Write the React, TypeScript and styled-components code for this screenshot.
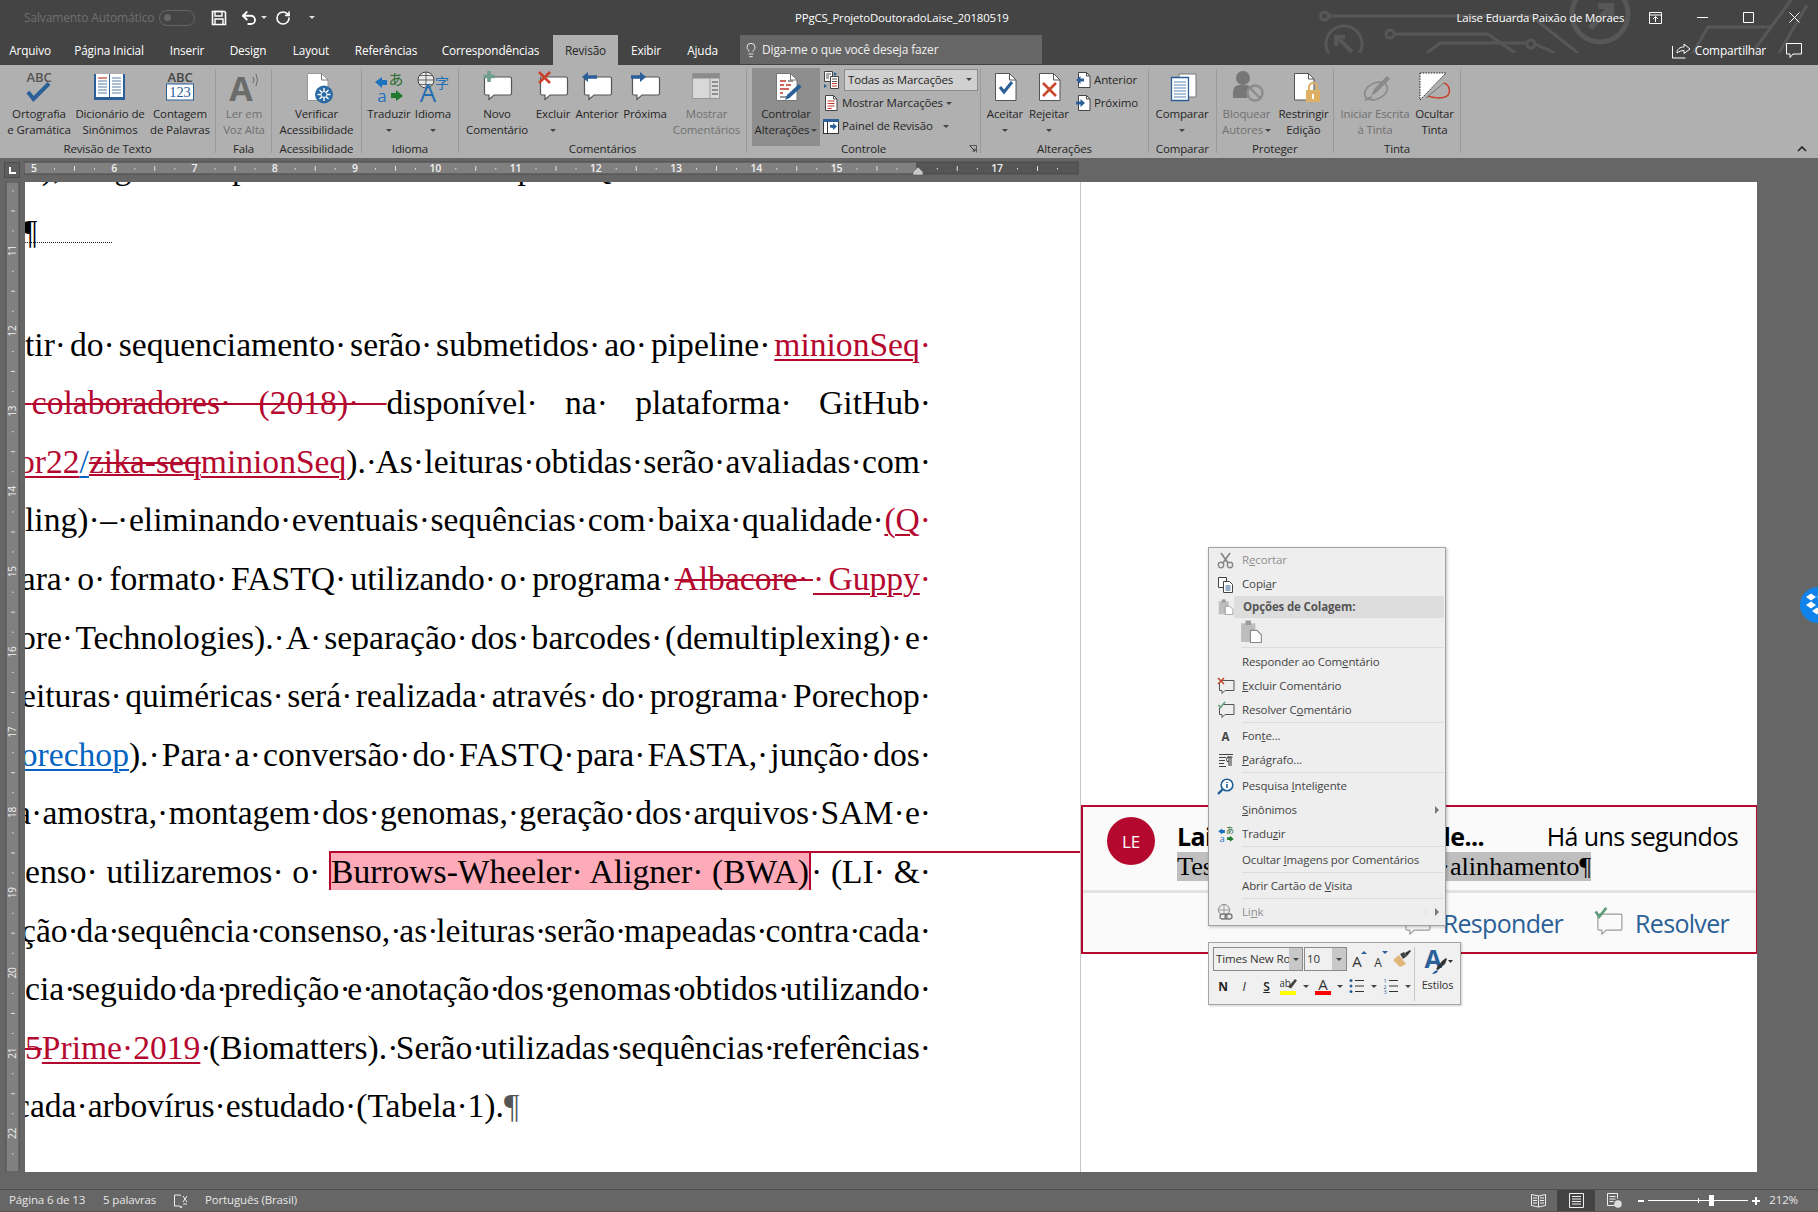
import React from 'react'
import styled, { createGlobalStyle } from 'styled-components'
import { Lightbulb, Undo2, RotateCw } from 'lucide-react'

const UI_FONT = '"Open Sans", "Noto Sans", sans-serif'
const SERIF = '"Liberation Serif", "Times New Roman", serif'
const RED = '#b5082f'
const BLUE = '#2b5f97'

const GlobalStyle = createGlobalStyle`
  html, body {
    margin: 0;
    width: 1818px;
    height: 1212px;
    overflow: hidden;
    background: #666;
  }
`

const Window = styled.div`
  position: relative;
  display: flex;
  flex-direction: column;
  width: 1818px;
  height: 1212px;
  overflow: hidden;
  font-family: ${UI_FONT};
  font-size: 11.5px;
  letter-spacing: -0.14px;
  color: #262626;
`

/* ---------- title bar ---------- */

const Chrome = styled.div`
  position: relative;
  background: #444;
  height: 65px;
  flex-shrink: 0;
`

const CircuitArt = styled.svg`
  position: absolute;
  left: 0;
  top: 0;
`

const TitleBar = styled.div`
  position: relative;
  display: flex;
  align-items: center;
  height: 35px;
  color: #fff;
`

const AutoSaveLabel = styled.span`
  margin-left: 24px;
  width: 135px;
  color: #707070;
  font-size: 12px;
`

const Toggle = styled.span`
  display: block;
  width: 36px;
  height: 16px;
  border: 1.5px solid #666;
  border-radius: 9px;
  box-sizing: border-box;
  padding: 3px 4px;
  &::before {
    content: '';
    display: block;
    width: 7px;
    height: 7px;
    border-radius: 50%;
    background: #666;
  }
`

const Qat = styled.div`
  display: flex;
  align-items: center;
  margin-left: 16px;
  width: 585px;
`

const QatSlot = styled.span<{ $w: number }>`
  display: flex;
  align-items: center;
  width: ${(p) => p.$w}px;
`

const DocTitle = styled.span`
  width: 300px;
  font-size: 11.4px;
`

const UserName = styled.span`
  margin-left: 362px;
  width: 176px;
  font-size: 11.4px;
  white-space: nowrap;
`

const WinBtn = styled.span<{ $w: number }>`
  display: flex;
  justify-content: center;
  width: ${(p) => p.$w}px;
`

const TabRow = styled.div`
  position: relative;
  display: flex;
  align-items: stretch;
  height: 30px;
`

const Tab = styled.span<{ $w: number; $active?: boolean }>`
  display: flex;
  align-items: center;
  justify-content: center;
  width: ${(p) => p.$w}px;
  font-size: 11.8px;
  margin-left: ${(p) => (p.$active ? 2 : 0)}px;
  color: ${(p) => (p.$active ? '#262626' : '#fff')};
  background: ${(p) => (p.$active ? '#b0b0b0' : 'transparent')};
`

const TellMe = styled.div`
  display: flex;
  align-items: center;
  gap: 3px;
  margin-left: 9px;
  padding-left: 3px;
  width: 299px;
  height: 29px;
  background: #666;
  color: #f0f0f0;
  font-size: 12px;
`

const ShareBox = styled.div`
  display: flex;
  align-items: center;
  margin-left: auto;
  padding-right: 15px;
  color: #fff;
  font-size: 11.8px;
  gap: 4px;
`

const CommentToggle = styled.span`
  display: block;
  margin-left: 15px;
`

/* ---------- ribbon ---------- */

const Ribbon = styled.div`
  position: relative;
  display: flex;
  height: 93px;
  background: #b0b0b0;
  flex-shrink: 0;
`

const Group = styled.div<{ $w: number }>`
  position: relative;
  width: ${(p) => p.$w}px;
  height: 84px;
  margin-top: 4px;
  flex-shrink: 0;
  box-sizing: border-box;
  border-right: 1px solid #9a9a9a;
`

const GroupBody = styled.div<{ $pad?: number }>`
  display: flex;
  height: 72px;
  padding-left: ${(p) => p.$pad ?? 0}px;
`

const GroupLabel = styled.div`
  height: 16px;
  line-height: 16px;
  text-align: center;
  white-space: nowrap;
`

const Launcher = styled.svg`
  position: absolute;
  right: 3px;
  bottom: 0;
`

const BtnWrap = styled.div<{ $w: number; $active?: boolean; $off?: boolean }>`
  display: flex;
  flex-direction: column;
  align-items: center;
  flex-shrink: 0;
  width: ${(p) => p.$w}px;
  height: ${(p) => (p.$active ? 78 : 72)}px;
  margin-top: ${(p) => (p.$active ? -1 : 0)}px;
  background: ${(p) => (p.$active ? '#8e8e8e' : 'transparent')};
  color: ${(p) => (p.$off ? '#707070' : '#262626')};
`

const IconSlot = styled.div<{ $active?: boolean }>`
  display: flex;
  justify-content: center;
  height: 37px;
  width: 36px;
  margin-top: ${(p) => (p.$active ? 1 : 0)}px;
`

const BtnText = styled.div`
  line-height: 16px;
  text-align: center;
  white-space: nowrap;
`

const CaretLine = styled.div`
  display: flex;
  justify-content: center;
  align-items: center;
  height: 16px;
`

const Caret = styled.span<{ $c?: string; $m?: number }>`
  display: inline-block;
  margin-left: ${(p) => p.$m ?? 0}px;
  width: 0;
  height: 0;
  vertical-align: middle;
  border-left: 3px solid transparent;
  border-right: 3px solid transparent;
  border-top: 3px solid ${(p) => p.$c ?? '#444'};
`

const SmallColumn = styled.div<{ $ml: number }>`
  display: flex;
  flex-direction: column;
  margin-left: ${(p) => p.$ml}px;
  margin-top: -1px;
`

const SmallRow = styled.div`
  display: flex;
  align-items: center;
  height: 23px;
  gap: 3px;
  white-space: nowrap;
`

const MarkupSelect = styled.div`
  display: flex;
  align-items: center;
  justify-content: space-between;
  box-sizing: border-box;
  width: 134px;
  height: 22px;
  padding: 0 5px 0 3px;
  background: #d0d0d0;
  border: 1px solid #8c8c8c;
`

const CollapseRibbon = styled.svg`
  position: absolute;
  right: 11px;
  bottom: 6px;
`

const Glyph = styled.svg`
  display: block;
  flex-shrink: 0;
`

/* ---------- rulers ---------- */

const RulerRow = styled.div`
  display: flex;
  align-items: flex-start;
  height: 24px;
  background: #666;
  flex-shrink: 0;
`

const RulerCorner = styled.div`
  margin: 4px 4px 0 4px;
  width: 14px;
  height: 14px;
  border: 1px solid #4c4c4c;
  background: #5e5e5e;
  display: flex;
  align-items: flex-end;
  justify-content: center;
  box-sizing: content-box;
  &::before {
    content: '';
    width: 5px;
    height: 5px;
    margin-bottom: 3px;
    border-left: 2px solid #fff;
    border-bottom: 2px solid #fff;
  }
`

/* ---------- document ---------- */

const Workspace = styled.div`
  display: flex;
  height: 990px;
  flex-shrink: 0;
`

const PageSheet = styled.div`
  display: flex;
  width: 1732px;
  background: #fff;
  flex-shrink: 0;
`

const TextColumn = styled.div`
  width: 1055px;
  box-sizing: border-box;
  padding-right: 149px;
  overflow: hidden;
  font-family: ${SERIF};
  font-size: 33.6px;
  letter-spacing: 0;
  color: #000;
  flex-shrink: 0;
`

const Line = styled.div<{ $last?: boolean; $bleed?: number; $after?: number; $top?: number }>`
  height: 58.6px;
  line-height: 58.6px;
  word-spacing: ${(p) => (p.$last ? '-0.25em' : '-0.5em')};
  white-space: normal;
  text-align: justify;
  text-align-last: ${(p) => (p.$last ? 'left' : 'justify')};
  margin-left: ${(p) => -(p.$bleed ?? 0)}px;
  margin-top: ${(p) => p.$top ?? 0}px;
  margin-bottom: ${(p) => p.$after ?? 0}px;
`

const CutLine = styled.div`
  height: 58.6px;
  line-height: 58.6px;
  white-space: pre;
  margin-top: -43px;
`

const Leader = styled.span`
  display: inline-block;
  width: 88px;
  height: 0;
  margin-left: -13px;
  border-bottom: 1px dotted #222;
  vertical-align: baseline;
`

const Ins = styled.span`
  color: ${RED};
  text-decoration: underline;
  text-decoration-thickness: 2px;
  text-underline-offset: 3px;
`

const InsDot = styled.span`
  color: ${RED};
`

const Del = styled.span<{ $dotted?: boolean }>`
  color: ${RED};
  text-decoration: line-through ${(p) => (p.$dotted ? 'underline' : '')};
  text-decoration-thickness: 2px;
`

const HyperLink = styled.span`
  color: #0563c1;
  text-decoration: underline;
  text-decoration-thickness: 2px;
  text-underline-offset: 3px;
`

const CommentMark = styled.span`
  position: relative;
  background: #fdaab9;
  border-top: 2px solid ${RED};
  border-left: 2px solid ${RED};
  border-right: 2px solid ${RED};
  &::after {
    content: '';
    position: absolute;
    left: 100%;
    top: -2px;
    width: 400px;
    height: 2px;
    background: ${RED};
  }
`

const Mark = styled.span`
  color: #555;
`

const MarkupArea = styled.div`
  flex: 1;
  border-left: 1px solid #c6c6c6;
  padding-top: 623px;
  min-width: 0;
`

const CommentCard = styled.div`
  box-sizing: border-box;
  height: 149px;
  border: 2px solid ${RED};
  border-right-width: 1px;
  background: #fafafa;
  display: flex;
  flex-direction: column;
`

const CommentTop = styled.div`
  display: flex;
  height: 83px;
  padding-left: 24px;
`

const Avatar = styled.div`
  display: flex;
  align-items: center;
  justify-content: center;
  flex-shrink: 0;
  width: 48px;
  height: 48px;
  margin-top: 10px;
  border-radius: 50%;
  background: ${RED};
  color: #fff;
  font-size: 17px;
`

const CommentBody = styled.div`
  margin-left: 22px;
  flex: 1;
`

const CommentHead = styled.div`
  display: flex;
  align-items: center;
  justify-content: space-between;
  box-sizing: border-box;
  height: 45px;
  padding: 12px 18px 0 0;
  font-size: 25px;
  letter-spacing: -0.6px;
  color: #000;
`

const Author = styled.span`
  font-weight: 700;
`

const CommentText = styled.div`
  font-family: ${SERIF};
  font-size: 26.2px;
  letter-spacing: 0;
  color: #000;
  word-spacing: -0.25em;
  line-height: 29px;
  height: 29px;
  white-space: nowrap;
`

const Selected = styled.span`
  background: #bfbfbf;
`

const CommentDivider = styled.div`
  height: 3px;
  background: #e3e3e3;
`

const CommentFoot = styled.div`
  display: flex;
  align-items: center;
  justify-content: flex-end;
  flex: 1;
  padding-right: 27px;
  gap: 30px;
  color: ${BLUE};
  font-size: 25px;
  letter-spacing: -0.7px;
`

const CommentAction = styled.span`
  display: flex;
  align-items: center;
  gap: 10px;
`

/* ---------- floating menu ---------- */

const ContextMenu = styled.div`
  position: absolute;
  left: 1208px;
  top: 547px;
  width: 238px;
  height: 379px;
  box-sizing: border-box;
  padding: 0 1px 0 0;
  background: #eee;
  border: 1px solid #a3a3a3;
  box-shadow: 1px 1px 3px rgba(0, 0, 0, 0.25);
  color: #444;
  font-size: 11.5px;
`

const MenuItem = styled.div<{ $off?: boolean }>`
  display: flex;
  align-items: center;
  height: 24px;
  color: ${(p) => (p.$off ? '#8f8f8f' : '#444')};
`

const MenuIcon = styled.span`
  display: flex;
  align-items: center;
  justify-content: center;
  width: 33px;
  height: 24px;
  flex-shrink: 0;
`

const MenuText = styled.span`
  flex: 1;
  padding-bottom: 2px;
  white-space: nowrap;
`

const MenuArrow = styled.span<{ $split?: boolean }>`
  margin-right: 9px;
  padding-left: ${(p) => (p.$split ? 9 : 0)}px;
  border-left: ${(p) => (p.$split ? '1px solid #ddd' : 'none')};
  width: 0;
  height: 0;
  border-top: 4px solid transparent;
  border-bottom: 4px solid transparent;
  box-sizing: content-box;
  &::after {
    content: '';
    display: block;
    margin-top: -4px;
    width: 0;
    height: 0;
    border-top: 4px solid transparent;
    border-bottom: 4px solid transparent;
    border-left: 4px solid #777;
  }
`

const MenuHeader = styled.div`
  display: flex;
  align-items: center;
  height: 22px;
`

const MenuHeaderBand = styled.div`
  flex: 1;
  align-self: stretch;
  display: flex;
  align-items: center;
  margin-left: -8px;
  padding: 0 0 1px 9px;
  background: #ddd;
  font-weight: 700;
  color: #555;
`

const PasteRow = styled.div`
  height: 29px;
  padding: 2px 0 0 31px;
  box-sizing: border-box;
`

const MenuRule = styled.div<{ $h?: number }>`
  height: ${(p) => p.$h ?? 2}px;
  margin-left: 33px;
  display: flex;
  align-items: flex-start;
  &::before {
    content: '';
    flex: 1;
    height: 1px;
    background: #dcdcdc;
  }
`

const MiniBar = styled.div`
  position: absolute;
  left: 1208px;
  top: 942px;
  display: flex;
  box-sizing: border-box;
  width: 253px;
  height: 63px;
  padding: 4px 0 0 4px;
  background: #f0f0f0;
  border: 1px solid #a5a5a5;
  box-shadow: 1px 1px 2px rgba(0, 0, 0, 0.2);
  color: #333;
`

const MiniLeft = styled.div`
  width: 201px;
  flex-shrink: 0;
`

const MiniTop = styled.div`
  display: flex;
  align-items: center;
  height: 24px;
`

const MiniBottom = styled.div`
  display: flex;
  align-items: center;
  height: 26px;
  margin-top: 2px;
`

const ComboBox = styled.div<{ $w: number }>`
  display: flex;
  box-sizing: border-box;
  width: ${(p) => p.$w}px;
  height: 24px;
  margin-right: 1px;
  border: 1px solid #8a8a8a;
  background: #f0f0f0;
`

const ComboText = styled.span`
  flex: 1;
  overflow: hidden;
  white-space: nowrap;
  padding-left: 2px;
  line-height: 21px;
  font-size: 11.5px;
`

const ComboDrop = styled.span<{ $w: number }>`
  display: flex;
  align-items: center;
  justify-content: center;
  width: ${(p) => p.$w}px;
  background: #c8c8c8;
`

const MiniTool = styled.span<{ $w: number }>`
  display: flex;
  align-items: center;
  justify-content: center;
  flex-shrink: 0;
  width: ${(p) => p.$w}px;
`

const BoldLetter = styled.span<{ $kind: 'b' | 'i' | 's' }>`
  font-size: 12px;
  color: #222;
  font-weight: ${(p) => (p.$kind === 'b' ? 700 : p.$kind === 's' ? 600 : 400)};
  font-style: ${(p) => (p.$kind === 'i' ? 'italic' : 'normal')};
  text-decoration: ${(p) => (p.$kind === 's' ? 'underline' : 'none')};
`

const MiniRight = styled.div`
  flex: 1;
  display: flex;
  flex-direction: column;
  align-items: center;
  border-left: 1px solid #c8c8c8;
  height: 54px;
`

const StylesLabel = styled.span`
  margin-top: 2px;
  font-size: 11px;
`

const DropboxBadge = styled.div`
  position: absolute;
  left: 1800px;
  top: 587px;
  width: 36px;
  height: 36px;
  border-radius: 50%;
  background: #1083ea;
`

/* ---------- status bar ---------- */

const GapRow = styled.div`
  height: 17px;
  background: #666;
  flex-shrink: 0;
`

const StatusBar = styled.div`
  display: flex;
  align-items: center;
  height: 23px;
  box-sizing: border-box;
  background: #666;
  border-top: 1px solid #4e4e4e;
  border-bottom: 1px solid #555;
  color: #e6e6e6;
  flex-shrink: 0;
`

const StatusText = styled.span<{ $ml: number; $w?: number }>`
  margin-left: ${(p) => p.$ml}px;
  width: ${(p) => (p.$w ? `${p.$w}px` : 'auto')};
  padding-bottom: 3px;
  white-space: nowrap;
`

const StatusRight = styled.div`
  display: flex;
  align-items: center;
  align-self: stretch;
  margin-left: auto;
  padding-right: 20px;
`

const ViewBtn = styled.span<{ $on?: boolean }>`
  display: flex;
  align-items: center;
  justify-content: center;
  width: 38px;
  background: ${(p) => (p.$on ? '#444' : 'transparent')};
  align-self: stretch;
`

const ZoomSign = styled.span`
  display: block;
  width: 6px;
  height: 2px;
  margin-left: 5px;
  background: #fff;
`

const ZoomTrack = styled.span`
  position: relative;
  display: block;
  width: 100px;
  height: 1px;
  margin: 0 4px;
  background: #fff;
`

const ZoomTick = styled.span`
  position: absolute;
  left: 50px;
  top: -2px;
  width: 1px;
  height: 5px;
  background: #fff;
`

const ZoomThumb = styled.span<{ $left: number }>`
  position: absolute;
  left: ${(p) => p.$left}px;
  top: -5px;
  width: 5px;
  height: 11px;
  background: #fff;
`

/* ---------- drawings ---------- */

type IconProps = { s?: number; w?: number; h?: number; vb?: string; children: React.ReactNode }

const Ic = ({ s = 36, w, h, vb = '0 0 36 36', children }: IconProps) => (
  <Glyph width={w ?? s} height={h ?? s} viewBox={vb}>
    {children}
  </Glyph>
)

const BUBBLE =
  'M7 8h24a1.5 1.5 0 0 1 1.5 1.5v15a1.5 1.5 0 0 1-1.5 1.5H15l-5 4.5V26H7a1.5 1.5 0 0 1-1.5-1.5v-15A1.5 1.5 0 0 1 7 8z'

const DOC = 'M8.5 4.5h14l6.5 6.5v20.5H8.5z'
const DOG = 'M22.5 4.5v6.5H29'

const SpellIcon = () => (
  <Ic>
    <text x="18" y="12.5" textAnchor="middle" fontSize="13" fontWeight="600" fill="#555" fontFamily="Open Sans">ABC</text>
    <path d="M7 23l5.5 7L28 14.5" fill="none" stroke={BLUE} strokeWidth="4" />
  </Ic>
)

const BookIcon = () => (
  <Ic>
    <path d="M2 5h31v26H2z" fill={BLUE} />
    <path d="M4 5h13v23H4zM18 5h13v23H18z" fill="#fff" />
    <path d="M6 9h9" stroke="#c0392b" strokeWidth="1.2" />
    <path d="M6 12h9M6 15h9M6 18h9M6 21h9M6 24h9M20 9h9M20 12h9M20 15h9M20 18h9M20 21h9M20 24h9" stroke="#5a7fa8" strokeWidth="1.2" />
  </Ic>
)

const CountIcon = () => (
  <Ic>
    <text x="18" y="12.5" textAnchor="middle" fontSize="13" fontWeight="600" fill="#444" fontFamily="Open Sans">ABC</text>
    <rect x="4.5" y="15" width="27" height="16" fill="#fff" stroke={BLUE} />
    <text x="18" y="28" textAnchor="middle" fontSize="14.5" fill={BLUE} fontFamily="Liberation Serif">123</text>
  </Ic>
)

const ReadIcon = () => (
  <Ic>
    <text x="15" y="31.5" textAnchor="middle" fontSize="34" fontWeight="700" fill="#6b6b6b" fontFamily="Open Sans">A</text>
    <path d="M27 8q2 3 0 6M30 5q3 6 0 12" fill="none" stroke="#6b6b6b" />
  </Ic>
)

const AccessIcon = () => (
  <Ic>
    <path d={DOC} fill="#fff" stroke="#999" />
    <path d={DOG} fill="none" stroke="#777" />
    <circle cx="25" cy="25.5" r="9" fill="#2c6aa5" />
    <path d="M25 19v13M18.5 25.5h13M20.5 21l9 9M29.5 21l-9 9" stroke="#fff" strokeWidth="1.4" />
    <circle cx="25" cy="25.5" r="3" fill="#2c6aa5" stroke="#fff" />
  </Ic>
)

const TranslateIcon = ({ s = 36 }: { s?: number }) => (
  <Ic s={s}>
    <path d="M4 13l7-5v3h5v5h-5v3z" fill="#1e73be" />
    <text x="25" y="16" textAnchor="middle" fontSize="15" fill="#2c6b2f" fontFamily="Noto Sans CJK JP">あ</text>
    <text x="11" y="33" textAnchor="middle" fontSize="17" fill="#1e73be" fontFamily="Open Sans">a</text>
    <path d="M32 27l-7 5v-3h-5v-5h5v-3z" fill="#1f7a2e" />
  </Ic>
)

const LanguageIcon = () => (
  <Ic>
    <circle cx="11" cy="11" r="8" fill="#e8e8e8" stroke="#444" />
    <path d="M3 11h16M11 3v16M5 6.5h12M5 15.5h12" stroke="#444" strokeWidth=".8" fill="none" />
    <text x="13" y="33" textAnchor="middle" fontSize="26" fill="#1f6fb2" fontFamily="Open Sans">A</text>
    <text x="27" y="19" textAnchor="middle" fontSize="14" fill="#1f6fb2" fontFamily="Noto Sans CJK SC">字</text>
  </Ic>
)

const CommentIcon = ({ kind }: { kind: 'new' | 'del' | 'prev' | 'next' }) => (
  <Ic>
    <path d={BUBBLE} fill="#fff" stroke="#555" strokeWidth="1.2" />
    {kind === 'new' && <path d="M10 2v11M4.5 7.5h11" stroke="#6f9f8c" strokeWidth="3.6" />}
    {kind === 'del' && <path d="M4 3l11 11M15 3L4 14" stroke="#c8412b" strokeWidth="2.6" />}
    {kind === 'prev' && <path d="M3 8l6-5v3.2h9v3.6H9V13z" fill={BLUE} />}
    {kind === 'next' && <path d="M19 8l-6-5v3.2H4v3.6h9V13z" fill={BLUE} />}
  </Ic>
)

const ShowCommentsIcon = () => (
  <Ic>
    <rect x="3.5" y="4.5" width="27" height="25" fill="#d8d8d8" stroke="#999" />
    <rect x="3.5" y="4.5" width="27" height="5" fill="#8c8c8c" />
    <path d="M21 10v19" stroke="#999" />
    <path d="M23 13h6M23 17h6M23 21h6M23 25h6" stroke="#777" strokeWidth="1.4" />
  </Ic>
)

const TrackIcon = () => (
  <Ic>
    <path d={DOC} fill="#fff" stroke="#777" />
    <path d={DOG} fill="none" stroke="#777" />
    <path d="M12 12h6M12 16h4M18 16h5M12 20h9M12 24h3" stroke="#c0392b" strokeWidth="1.3" />
    <path d="M20 12h5M12 28h7" stroke="#777" strokeWidth="1.3" />
    <path d="M17 31l2-5 12-11 2.5 3-12 11z" fill={BLUE} />
  </Ic>
)

const AcceptIcon = () => (
  <Ic>
    <path d={DOC} fill="#fff" stroke="#555" />
    <path d={DOG} fill="none" stroke="#555" />
    <path d="M13 18l4 5 8-10" fill="none" stroke={BLUE} strokeWidth="3" />
  </Ic>
)

const RejectIcon = () => (
  <Ic>
    <path d={DOC} fill="#fff" stroke="#555" />
    <path d={DOG} fill="none" stroke="#555" />
    <path d="M12 14l13 13M25 14L12 27" stroke="#c8492e" strokeWidth="2.6" />
  </Ic>
)

const CompareIcon = () => (
  <Ic>
    <path d="M15 5h17v23H15z" fill="#fff" stroke="#777" />
    <path d="M7.5 8.5h17v23h-17z" fill="#fff" stroke={BLUE} strokeWidth="1.3" />
    <path d="M10 13h12M10 16h12M10 19h12M10 22h12M10 25h12M10 28h12" stroke="#5a86b5" strokeWidth="1.1" />
  </Ic>
)

const BlockIcon = () => (
  <Ic>
    <circle cx="14" cy="9" r="7" fill="#777" />
    <path d="M4 29v-6q0-6 6-7h8q4 1 5 4l-5 9z" fill="#777" />
    <circle cx="26" cy="24" r="7.5" fill="#b0b0b0" stroke="#8c8c8c" strokeWidth="2.4" />
    <path d="M21 19l10 10" stroke="#8c8c8c" strokeWidth="2.4" />
  </Ic>
)

const RestrictIcon = () => (
  <Ic>
    <path d="M8.5 4.5h14L28 10v21H8.5z" fill="#fff" stroke="#555" />
    <path d="M22.5 4.5V10H28" fill="none" stroke="#555" />
    <path d="M23 21v-3a4 4 0 0 1 8 0v3" fill="none" stroke="#deb063" strokeWidth="2" />
    <rect x="20" y="21" width="14" height="12" fill="#deb063" />
    <rect x="26" y="25" width="2" height="5" fill="#fff" />
  </Ic>
)

const InkIcon = () => (
  <Ic>
    <ellipse cx="19" cy="22" rx="12" ry="8" fill="none" stroke="#8a8a8a" strokeWidth="1.6" transform="rotate(-25 19 22)" />
    <path d="M14 27l3-7 13-13 3 3-13 13z" fill="#8a8a8a" />
    <path d="M8 31l7-3" stroke="#8a8a8a" strokeWidth="2" />
  </Ic>
)

const HideInkIcon = () => (
  <Ic>
    <path d="M3 4h26L3 31z" fill="#fff" stroke="#222" strokeDasharray="1.5 1.2" />
    <path d="M27 14c6 2 7 10 3 13-4 3-14 2-19 0" fill="none" stroke="#c8412b" strokeWidth="1.5" />
    <path d="M27 14L9 29" stroke="#777" />
  </Ic>
)

const SmallDocArrow = ({ dir }: { dir: 'l' | 'r' }) => (
  <Ic s={16} vb="0 0 16 16">
    <path d="M3.5.5h8L15 4v11.5H3.5z" fill="#fff" stroke="#444" />
    <path d="M11.5.5V4H15" fill="none" stroke="#444" />
    {dir === 'l' ? (
      <path d="M1 8l4.5-4v2.5H9v3H5.5V12z" fill={BLUE} />
    ) : (
      <path d="M10 8L5.5 4v2.5H1v3h4.5V12z" fill={BLUE} />
    )}
  </Ic>
)

const MarkupAllIcon = () => (
  <Ic s={18} vb="0 0 18 18">
    <path d="M1.5.5h8v10h-8z" fill="#fff" stroke="#444" />
    <path d="M7.5 5.5h8v12h-8z" fill="#fff" stroke="#444" />
    <path d="M3 3h5M3 5h3M3 7h3M9 8h5M9 10.5h5" stroke="#555" />
    <path d="M9 12.5h5M9 15h5" stroke="#c0392b" />
    <path d="M11 1l3 2-3 2M1 13l3 2-3 2" fill={BLUE} />
  </Ic>
)

const ShowMarkupIcon = () => (
  <Ic s={16} vb="0 0 16 16">
    <path d="M2.5.5h8L14 4v11.5H2.5z" fill="#fff" stroke="#444" />
    <path d="M10.5.5V4H14" fill="none" stroke="#444" />
    <path d="M4.5 6h7M4.5 8.5h7M4.5 11h7M4.5 13.5h4" stroke="#c0392b" />
  </Ic>
)

const PanelIcon = () => (
  <Ic s={16} vb="0 0 16 16">
    <rect x=".5" y="2.5" width="15" height="13" fill="#fff" stroke="#333" />
    <rect y="1" width="16" height="3" fill={BLUE} />
    <path d="M4.5 4v11" stroke="#333" />
    <path d="M7 9.5V7h3V5l4 3.5-4 3.5v-2z" fill={BLUE} />
  </Ic>
)

const SaveIcon = () => (
  <Ic s={16} vb="0 0 16 16">
    <path d="M1.5 1.5h12l1 1v12h-13z" fill="none" stroke="#fff" strokeWidth="1.6" />
    <path d="M4 1.5h7V6H4zM4 14V9h8v5" fill="none" stroke="#fff" strokeWidth="1.4" />
  </Ic>
)

const ShareIcon = () => (
  <Ic w={20} h={18} vb="0 0 20 18">
    <path d="M1.5 5v12h13" fill="none" stroke="#fff" />
    <path d="M6 12c0-4 3-6 7-6V3l6 5-6 4.5v-3c-3 0-5 1-7 2.5z" fill="none" stroke="#fff" />
  </Ic>
)

const CommentOutline = () => (
  <Ic w={18} h={18} vb="0 0 18 18">
    <path d="M1.5 2.5h15V13H8l-3 3.5V13H1.5z" fill="none" stroke="#fff" />
  </Ic>
)

const ScissorsIcon = () => (
  <Ic s={17} vb="0 0 17 17">
    <path d="M4 1l7 10M13 1L6 11" stroke="#888" strokeWidth="1.8" />
    <circle cx="4" cy="13" r="2.7" fill="none" stroke="#888" strokeWidth="1.4" />
    <circle cx="13" cy="13" r="2.7" fill="none" stroke="#888" strokeWidth="1.4" />
  </Ic>
)

const CopyIcon = () => (
  <Ic s={17} vb="0 0 17 17">
    <path d="M1.5 1.5h8v10h-8z" fill="#fff" stroke="#444" />
    <path d="M6.5 5.5h6l3 3v8h-9z" fill="#fff" stroke="#444" />
    <path d="M8.5 10h5M8.5 12h5M8.5 14h5" stroke={BLUE} />
  </Ic>
)

const PasteIcon = ({ s = 16 }: { s?: number }) => (
  <Ic s={s} vb="0 0 21 21">
    <rect x="1" y="3" width="13" height="17" fill="#bdbdbd" />
    <rect x="5" y="0.5" width="5" height="4" fill="#9a9a9a" />
    <path d="M9.5 9.5h6l4 4v7h-10z" fill="#fff" stroke="#888" />
  </Ic>
)

const BubbleX = () => (
  <Ic s={18} vb="0 0 18 18">
    <path d="M4 3.5h13v10H8l-3 3v-3H2.5V5" fill="none" stroke="#555" />
    <path d="M1 1l6 6M7 1L1 7" stroke="#c8412b" strokeWidth="1.5" />
  </Ic>
)

const BubbleCheck = () => (
  <Ic s={18} vb="0 0 18 18">
    <path d="M6 3.5h11v10H8l-3 3v-3H2.5V7" fill="none" stroke="#555" />
    <path d="M1.5 4l2 2.5L8 1" fill="none" stroke="#5f9c7c" strokeWidth="1.6" />
  </Ic>
)

const ParagraphIcon = () => (
  <Ic s={16} vb="0 0 16 16">
    <path d="M1 5.5h7M1 8.5h6M1 11.5h5M1 14.5h7M1 2.5h14" stroke="#444" />
    <path d="M9.5 5h5M11 5v9M13 5v9M11 5a2 2 0 0 0 0 5" fill="none" stroke="#333" />
  </Ic>
)

const SmartLookup = () => (
  <Ic s={17} vb="0 0 17 17">
    <circle cx="10" cy="7" r="5.8" fill="#fff" stroke="#1f5e99" strokeWidth="1.6" />
    <path d="M5.5 11.5L1 16" stroke="#1f5e99" strokeWidth="2.4" />
    <path d="M10 4v.9M10 6v4" stroke="#1f5e99" strokeWidth="1.6" />
  </Ic>
)

const LinkIcon = () => (
  <Ic s={17} vb="0 0 17 17">
    <circle cx="7" cy="6" r="5.5" fill="#eee" stroke="#888" />
    <path d="M1.5 6h11M7 .5v11" stroke="#888" strokeWidth=".8" />
    <rect x="3" y="10" width="7" height="5" rx="2.5" fill="#eee" stroke="#777" strokeWidth="1.3" />
    <rect x="8" y="10" width="7" height="5" rx="2.5" fill="none" stroke="#777" strokeWidth="1.3" />
  </Ic>
)

const SmallA = ({ up }: { up: boolean }) => (
  <Ic s={20} vb="0 0 20 20">
    <text x="8" y="18" textAnchor="middle" fontSize={up ? 15 : 12} fill="#333" fontFamily="Open Sans">A</text>
    <path d={up ? 'M12 5l3-3 3 3z' : 'M12 2h6l-3 3z'} fill={BLUE} />
  </Ic>
)

const BrushIcon = () => (
  <Ic s={20} vb="0 0 20 20">
    <path d="M1 11l6-5 7 9-6 3z" fill="#e1b678" />
    <path d="M8 5l4-2 3 4-4 3z" fill="#444" />
    <path d="M13 4l5-3 1 1-4 5z" fill="#333" />
  </Ic>
)

const StylesIcon = () => (
  <Ic w={32} h={28} vb="0 0 32 28">
    <text x="11" y="21" textAnchor="middle" fontSize="25" fontWeight="700" fill={BLUE} fontFamily="Open Sans">A</text>
    <path d="M14 22l6-8 4-3 1 1-2 5-7 6z" fill="#333" />
    <path d="M10 27q2-3 5-4l1 1q-1 3-6 3z" fill={BLUE} />
    <path d="M26 13h5l-2.5 3z" fill="#333" />
  </Ic>
)

const HighlightIcon = () => (
  <Ic w={17} h={20} vb="0 0 17 20">
    <text x="5" y="11" textAnchor="middle" fontSize="10" fill="#333" fontFamily="Open Sans">ab</text>
    <path d="M8 11l7-8 2 1.5-6 8z" fill="#444" />
    <rect x="0" y="15" width="16" height="4" fill="#ffff00" />
  </Ic>
)

const FontColorIcon = () => (
  <Ic w={17} h={20} vb="0 0 17 20">
    <text x="8" y="14" textAnchor="middle" fontSize="15" fill="#333" fontFamily="Open Sans">A</text>
    <rect x="0" y="15" width="16" height="4" fill="#ff0000" />
  </Ic>
)

const BulletsIcon = () => (
  <Ic s={16} vb="0 0 16 16">
    <path d="M6 2.5h9M6 8h9M6 13.5h9" stroke="#333" />
    <circle cx="2" cy="2.5" r="1.5" fill={BLUE} />
    <circle cx="2" cy="8" r="1.5" fill={BLUE} />
    <circle cx="2" cy="13.5" r="1.5" fill={BLUE} />
  </Ic>
)

const NumberingIcon = () => (
  <Ic s={16} vb="0 0 16 16">
    <path d="M6 2.5h9M6 8h9M6 13.5h9" stroke="#333" />
    <text x="2" y="5" fontSize="5.5" textAnchor="middle" fill={BLUE} fontFamily="Open Sans">1</text>
    <text x="2" y="10.5" fontSize="5.5" textAnchor="middle" fill={BLUE} fontFamily="Open Sans">2</text>
    <text x="2" y="16" fontSize="5.5" textAnchor="middle" fill={BLUE} fontFamily="Open Sans">3</text>
  </Ic>
)

const Circuit = () => (
  <CircuitArt width={1818} height={53} viewBox="0 0 1818 53">
    <g fill="none" stroke="#575757" strokeWidth="3">
      <circle cx="1324.5" cy="16" r="4" />
      <path d="M1329 16h202l47 37" />
      <circle cx="1344" cy="44" r="18" />
      <path d="M1352 52l-14-14M1336 46v-9h9" strokeWidth="4" />
      <circle cx="1390" cy="34" r="4" />
      <path d="M1394 34h94l27 19" />
      <path d="M1427 53l13-10h87" />
      <circle cx="1531" cy="44" r="4" />
      <path d="M1535 44l20 9" />
      <circle cx="1600" cy="14" r="28" strokeWidth="5" />
      <path d="M1590 28l20-20M1598 6h13v13" strokeWidth="6" />
      <path d="M1693 53l15-26h63M1752 53l39-53M1779 53l28-48" />
    </g>
  </CircuitArt>
)

const RULER_NUMS = [5, 6, 7, 8, 9, 10, 11, 12, 13, 14, 15, 16, 17]

const HRuler = () => (
  <Glyph width={1055} height={24} viewBox="0 0 1055 24">
    <rect y="4" width="892" height="12" fill="#808080" />
    <rect x="892" y="4" width="162" height="12" fill="#555" />
    <rect y="4" width="1054" height="12" fill="none" stroke="#4a4a4a" />
    {RULER_NUMS.map((n, i) => {
      const x = 10 + i * 80.25
      return (
        <g key={n}>
          {n !== 16 && (
            <text x={x} y="14" textAnchor="middle" fontSize="10.5" fontWeight="600" fill="#f0f0f0" fontFamily="Open Sans">
              {n}
            </text>
          )}
          <rect x={x + 40} y="8" width="1" height="5" fill="#e0e0e0" />
          <rect x={x + 20} y="10" width="1" height="1.5" fill="#e0e0e0" />
          <rect x={x + 60} y="10" width="1" height="1.5" fill="#e0e0e0" />
        </g>
      )
    })}
    <path d="M889 14l5-5 5 5v3h-10z" fill="#c8c8c8" stroke="#555" strokeWidth=".6" />
  </Glyph>
)

const VRuler = () => (
  <Glyph width={25} height={990} viewBox="0 0 25 990">
    <rect width="25" height="990" fill="#666" />
    <rect x="6" width="13" height="990" fill="#808080" stroke="#4e4e4e" />
    {Array.from({ length: 13 }, (_, i) => {
      const y = 68.7 + (i - 1) * 80.25
      return (
        <g key={i}>
          <text
            x="12.5"
            y={y}
            transform={`rotate(-90 12.5 ${y})`}
            dy="3.5"
            textAnchor="middle"
            fontSize="10"
            fill="#f0f0f0"
            fontFamily="Open Sans"
          >
            {10 + i}
          </text>
          <rect x="11" y={y + 40} width="4" height="1" fill="#e0e0e0" />
          <rect x="12" y={y + 20} width="1.5" height="1" fill="#e0e0e0" />
          <rect x="12" y={y + 60} width="1.5" height="1" fill="#e0e0e0" />
        </g>
      )
    })}
  </Glyph>
)

/* ---------- small pieces ---------- */

type RibbonBtnProps = {
  w: number
  label: string
  icon: React.ReactNode
  off?: boolean
  active?: boolean
  caret?: 'inline' | 'below'
}

const RibbonBtn = ({ w, label, icon, off, active, caret }: RibbonBtnProps) => (
  <BtnWrap $w={w} $off={off} $active={active}>
    <IconSlot $active={active}>{icon}</IconSlot>
    <BtnText>
      {label.split('\n').map((part, i, all) => (
        <div key={part}>
          {part}
          {caret === 'inline' && i === all.length - 1 && <Caret $m={2} />}
        </div>
      ))}
    </BtnText>
    {caret === 'below' && (
      <CaretLine>
        <Caret />
      </CaretLine>
    )}
  </BtnWrap>
)

type Menu = { icon?: React.ReactNode; text: React.ReactNode; off?: boolean; arrow?: boolean; split?: boolean }

const Item = ({ icon, text, off, arrow, split }: Menu) => (
  <MenuItem $off={off}>
    <MenuIcon>{icon}</MenuIcon>
    <MenuText>{text}</MenuText>
    {arrow && <MenuArrow $split={split} />}
  </MenuItem>
)

const App = () => {
  return (
    <Window>
      <GlobalStyle />
      <Chrome>
        <Circuit />
        <TitleBar>
          <AutoSaveLabel>Salvamento Automático</AutoSaveLabel>
          <Toggle />
          <Qat>
            <QatSlot $w={29}>
              <SaveIcon />
            </QatSlot>
            <QatSlot $w={35}>
              <Undo2 size={18} strokeWidth={2.4} color="#fff" />
              <Caret $c="#ddd" $m={3} />
            </QatSlot>
            <QatSlot $w={34}>
              <RotateCw size={16} strokeWidth={2.4} color="#fff" />
            </QatSlot>
            <QatSlot $w={20}>
              <Caret $c="#ddd" />
            </QatSlot>
          </Qat>
          <DocTitle>PPgCS_ProjetoDoutoradoLaise_20180519</DocTitle>
          <UserName>Laise Eduarda Paixão de Moraes</UserName>
          <WinBtn $w={47}>
            <Ic s={14} vb="0 0 14 14">
              <path d="M.5 1.5h12v11H.5zM.5 4h12" fill="none" stroke="#fff" />
              <path d="M6.5 11V6M4 8l2.5-2.5L9 8" fill="none" stroke="#fff" />
            </Ic>
          </WinBtn>
          <WinBtn $w={46}>
            <Ic s={11} vb="0 0 11 11">
              <path d="M0 5.5h11" stroke="#fff" />
            </Ic>
          </WinBtn>
          <WinBtn $w={46}>
            <Ic s={11} vb="0 0 11 11">
              <path d="M.5.5h10v10H.5z" fill="none" stroke="#fff" />
            </Ic>
          </WinBtn>
          <WinBtn $w={47}>
            <Ic s={11} vb="0 0 11 11">
              <path d="M.5.5l10 10M10.5.5l-10 10" stroke="#fff" />
            </Ic>
          </WinBtn>
        </TitleBar>
        <TabRow>
          <Tab $w={60}>Arquivo</Tab>
          <Tab $w={98}>Página Inicial</Tab>
          <Tab $w={58}>Inserir</Tab>
          <Tab $w={64}>Design</Tab>
          <Tab $w={62}>Layout</Tab>
          <Tab $w={88}>Referências</Tab>
          <Tab $w={121}>Correspondências</Tab>
          <Tab $w={65} $active>
            Revisão
          </Tab>
          <Tab $w={56}>Exibir</Tab>
          <Tab $w={57}>Ajuda</Tab>
          <TellMe>
            <Lightbulb size={16} strokeWidth={1.4} color="#f0f0f0" />
            Diga-me o que você deseja fazer
          </TellMe>
          <ShareBox>
            <ShareIcon />
            Compartilhar
            <CommentToggle>
              <CommentOutline />
            </CommentToggle>
          </ShareBox>
        </TabRow>
      </Chrome>

      <Ribbon>
        <Group $w={216}>
          <GroupBody $pad={2}>
            <RibbonBtn w={74} label={'Ortografia\ne Gramática'} icon={<SpellIcon />} />
            <RibbonBtn w={68} label={'Dicionário de\nSinônimos'} icon={<BookIcon />} />
            <RibbonBtn w={72} label={'Contagem\nde Palavras'} icon={<CountIcon />} />
          </GroupBody>
          <GroupLabel>Revisão de Texto</GroupLabel>
        </Group>
        <Group $w={56}>
          <GroupBody>
            <RibbonBtn w={56} off label={'Ler em\nVoz Alta'} icon={<ReadIcon />} />
          </GroupBody>
          <GroupLabel>Fala</GroupLabel>
        </Group>
        <Group $w={90}>
          <GroupBody>
            <RibbonBtn w={89} label={'Verificar\nAcessibilidade'} icon={<AccessIcon />} />
          </GroupBody>
          <GroupLabel>Acessibilidade</GroupLabel>
        </Group>
        <Group $w={97}>
          <GroupBody $pad={5}>
            <RibbonBtn w={44} caret="below" label="Traduzir" icon={<TranslateIcon />} />
            <RibbonBtn w={44} caret="below" label="Idioma" icon={<LanguageIcon />} />
          </GroupBody>
          <GroupLabel>Idioma</GroupLabel>
        </Group>
        <Group $w={288}>
          <GroupBody>
            <RibbonBtn w={76} label={'Novo\nComentário'} icon={<CommentIcon kind="new" />} />
            <RibbonBtn w={36} caret="below" label="Excluir" icon={<CommentIcon kind="del" />} />
            <RibbonBtn w={52} label="Anterior" icon={<CommentIcon kind="prev" />} />
            <RibbonBtn w={44} label="Próxima" icon={<CommentIcon kind="next" />} />
            <RibbonBtn w={79} off label={'Mostrar\nComentários'} icon={<ShowCommentsIcon />} />
          </GroupBody>
          <GroupLabel>Comentários</GroupLabel>
        </Group>
        <Group $w={234}>
          <GroupBody $pad={5}>
            <RibbonBtn w={68} active caret="inline" label={'Controlar\nAlterações'} icon={<TrackIcon />} />
            <SmallColumn $ml={3}>
              <SmallRow>
                <MarkupAllIcon />
                <MarkupSelect>
                  Todas as Marcações
                  <Caret />
                </MarkupSelect>
              </SmallRow>
              <SmallRow>
                <ShowMarkupIcon />
                <span>
                  Mostrar Marcações
                  <Caret $m={3} />
                </span>
              </SmallRow>
              <SmallRow>
                <PanelIcon />
                <span>
                  Painel de Revisão
                  <Caret $m={10} />
                </span>
              </SmallRow>
            </SmallColumn>
          </GroupBody>
          <GroupLabel>Controle</GroupLabel>
          <Launcher width={8} height={8} viewBox="0 0 8 8">
            <path d="M.5.5h7v7" fill="none" stroke="#555" />
            <path d="M1 1l5 5M3.5 6H6V3.5" fill="none" stroke="#333" />
          </Launcher>
        </Group>
        <Group $w={168}>
          <GroupBody>
            <RibbonBtn w={48} caret="below" label="Aceitar" icon={<AcceptIcon />} />
            <RibbonBtn w={40} caret="below" label="Rejeitar" icon={<RejectIcon />} />
            <SmallColumn $ml={6}>
              <SmallRow>
                <SmallDocArrow dir="l" />
                Anterior
              </SmallRow>
              <SmallRow>
                <SmallDocArrow dir="r" />
                Próximo
              </SmallRow>
            </SmallColumn>
          </GroupBody>
          <GroupLabel>Alterações</GroupLabel>
        </Group>
        <Group $w={67.5}>
          <GroupBody>
            <RibbonBtn w={66} caret="below" label="Comparar" icon={<CompareIcon />} />
          </GroupBody>
          <GroupLabel>Comparar</GroupLabel>
        </Group>
        <Group $w={117.5}>
          <GroupBody>
            <RibbonBtn w={60} off caret="inline" label={'Bloquear\nAutores'} icon={<BlockIcon />} />
            <RibbonBtn w={54} label={'Restringir\nEdição'} icon={<RestrictIcon />} />
          </GroupBody>
          <GroupLabel>Proteger</GroupLabel>
        </Group>
        <Group $w={127}>
          <GroupBody>
            <RibbonBtn w={82} off label={'Iniciar Escrita\nà Tinta'} icon={<InkIcon />} />
            <RibbonBtn w={37} label={'Ocultar\nTinta'} icon={<HideInkIcon />} />
          </GroupBody>
          <GroupLabel>Tinta</GroupLabel>
        </Group>
        <CollapseRibbon width={10} height={6} viewBox="0 0 10 6">
          <path d="M1 5l4-4 4 4" fill="none" stroke="#222" strokeWidth="1.6" />
        </CollapseRibbon>
      </Ribbon>

      <RulerRow>
        <RulerCorner />
        <HRuler />
      </RulerRow>

      <Workspace>
        <VRuler />
        <PageSheet>
          <TextColumn>
            <CutLine>{'  ),   segundo    protocolo   descrito   por   Quick'}</CutLine>
            <Line $last $bleed={3} $top={5} $after={54.4}>
              ¶<Leader />
            </Line>
            <Line>
              tir· do· sequenciamento· serão· submetidos· ao· pipeline· <Ins>minionSeq</Ins>
              <InsDot>·</InsDot>
            </Line>
            <Line>
              <Del>{'\u2009'}colaboradores· (2018)· </Del>
              disponível· na· plataforma· GitHub·
            </Line>
            <Line $bleed={7}>
              <Ins>or22</Ins>
              <HyperLink>/</HyperLink>
              <Del $dotted>zika-seq</Del>
              <Ins>minionSeq</Ins>).· As· leituras· obtidas· serão· avaliadas· com·
            </Line>
            <Line>
              ling)· –· eliminando· eventuais· sequências· com· baixa· qualidade· <Ins>(Q</Ins>
              <InsDot>·</InsDot>
            </Line>
            <Line $bleed={21}>
              para· o· formato· FASTQ· utilizando· o· programa· <Del>Albacore· </Del>
              <Ins>· Guppy</Ins>
              <InsDot>·</InsDot>
            </Line>
            <Line $bleed={6}>ore· Technologies).· A· separação· dos· barcodes· (demultiplexing)· e·</Line>
            <Line $bleed={4}>eituras· quiméricas· será· realizada· através· do· programa· Porechop·</Line>
            <Line $bleed={21}>
              <HyperLink>porechop</HyperLink>).· Para· a· conversão· do· FASTQ· para· FASTA,· junção· dos·
            </Line>
            <Line $bleed={9}>
              a· amostra,· montagem· dos· genomas,· geração· dos· arquivos· SAM· e·
            </Line>
            <Line>
              enso· utilizaremos· o· <CommentMark>Burrows-Wheeler· Aligner· (BWA)</CommentMark>· (LI· &amp;·
            </Line>
            <Line $bleed={4}>ção· da· sequência· consenso,· as· leituras· serão· mapeadas· contra· cada·</Line>
            <Line>cia· seguido· da· predição· e· anotação· dos· genomas· obtidos· utilizando·</Line>
            <Line>
              <Del>5</Del>
              <Ins>Prime·2019</Ins>· (Biomatters).· Serão· utilizadas· sequências· referências·
            </Line>
            <Line $last $bleed={10}>
              cada· arbovírus· estudado· (Tabela· 1).<Mark>¶</Mark>
            </Line>
          </TextColumn>
          <MarkupArea>
            <CommentCard>
              <CommentTop>
                <Avatar>LE</Avatar>
                <CommentBody>
                  <CommentHead>
                    <Author>Laise Eduarda Paixão de...</Author>
                    <span>Há uns segundos</span>
                  </CommentHead>
                  <CommentText>
                    <Selected>Teste· de· ferramenta· para· alinhamento¶</Selected>
                  </CommentText>
                </CommentBody>
              </CommentTop>
              <CommentDivider />
              <CommentFoot>
                <CommentAction>
                  <Ic s={32} vb="0 0 36 36">
                    <path d={BUBBLE} fill="none" stroke="#999" strokeWidth="1.3" />
                  </Ic>
                  Responder
                </CommentAction>
                <CommentAction>
                  <Ic s={32} vb="0 0 36 36">
                    <path d={BUBBLE} fill="none" stroke="#999" strokeWidth="1.3" />
                    <path d="M3 5l4 6 8-10" fill="none" stroke="#5f9c7c" strokeWidth="3" />
                  </Ic>
                  Resolver
                </CommentAction>
              </CommentFoot>
            </CommentCard>
          </MarkupArea>
        </PageSheet>
      </Workspace>

      <GapRow />
      <StatusBar>
        <StatusText $ml={9} $w={94}>Página 6 de 13</StatusText>
        <StatusText $ml={0} $w={70}>5 palavras</StatusText>
        <Ic s={16} vb="0 0 16 16">
          <path d="M7 2H1.5v11H7l1 2 1-2M7 2l1 1" fill="none" stroke="#eee" />
          <path d="M10 3l4 6M14 3l-4 6M10 11h4" stroke="#eee" />
        </Ic>
        <StatusText $ml={16}>Português (Brasil)</StatusText>
        <StatusRight>
          <ViewBtn>
            <Ic s={15} vb="0 0 15 15">
              <path d="M.5 1.5l7 1.500 7-1.500v11L7.500 14 .5 12.500zM7.500 3v11" fill="none" stroke="#eee" />
              <path d="M2 5h4M2 7.500h4M2 10h4M9 5h4M9 7.500h4M9 10h4" stroke="#eee" />
            </Ic>
          </ViewBtn>
          <ViewBtn $on>
            <Ic s={15} vb="0 0 15 15">
              <path d="M.5.5h14v14H.5z" fill="none" stroke="#eee" />
              <path d="M3 3.5h9M3 6h9M3 8.5h9M3 11h9" stroke="#eee" />
            </Ic>
          </ViewBtn>
          <ViewBtn>
            <Ic s={15} vb="0 0 15 15">
              <path d="M9 12.5H.5V.5h10v5" fill="none" stroke="#eee" />
              <path d="M2.5 3.5h6M2.5 6h6M2.5 8.5h4" stroke="#eee" />
              <circle cx="11" cy="11" r="3.8" fill="#ddd" />
            </Ic>
          </ViewBtn>
          <ZoomSign />
          <ZoomTrack>
            <ZoomTick />
            <ZoomThumb $left={61} />
          </ZoomTrack>
          <Ic s={8} vb="0 0 8 8">
            <path d="M0 4h8M4 0v8" stroke="#fff" strokeWidth="2" />
          </Ic>
          <StatusText $ml={9}>212%</StatusText>
        </StatusRight>
      </StatusBar>

      <ContextMenu>
        <Item off icon={<ScissorsIcon />} text={<>R<u>e</u>cortar</>} />
        <Item icon={<CopyIcon />} text={<>Copi<u>a</u>r</>} />
        <MenuHeader>
          <MenuIcon>
            <PasteIcon />
          </MenuIcon>
          <MenuHeaderBand>Opções de Colagem:</MenuHeaderBand>
        </MenuHeader>
        <PasteRow>
          <PasteIcon s={23} />
        </PasteRow>
        <MenuRule $h={3} />
        <Item text={<>Responder ao Com<u>e</u>ntário</>} />
        <Item icon={<BubbleX />} text={<><u>E</u>xcluir Comentário</>} />
        <Item icon={<BubbleCheck />} text={<>Resolver C<u>o</u>mentário</>} />
        <MenuRule />
        <Item icon={<strong>A</strong>} text={<>Fon<u>t</u>e...</>} />
        <Item icon={<ParagraphIcon />} text={<><u>P</u>arágrafo...</>} />
        <MenuRule />
        <Item icon={<SmartLookup />} text={<>Pesquisa <u>I</u>nteligente</>} />
        <Item arrow text={<><u>S</u>inônimos</>} />
        <Item icon={<TranslateIcon s={20} />} text={<>Tradu<u>z</u>ir</>} />
        <MenuRule />
        <Item text={<>Ocultar <u>I</u>magens por Comentários</>} />
        <MenuRule />
        <Item text={<>Abrir Cartão de <u>V</u>isita</>} />
        <MenuRule />
        <Item off arrow split icon={<LinkIcon />} text={<>Li<u>n</u>k</>} />
      </ContextMenu>

      <MiniBar>
        <MiniLeft>
          <MiniTop>
            <ComboBox $w={90}>
              <ComboText>Times New Ro</ComboText>
              <ComboDrop $w={13}>
                <Caret />
              </ComboDrop>
            </ComboBox>
            <ComboBox $w={45}>
              <ComboText>10</ComboText>
              <ComboDrop $w={14}>
                <Caret />
              </ComboDrop>
            </ComboBox>
            <MiniTool $w={22}>
              <SmallA up />
            </MiniTool>
            <MiniTool $w={20}>
              <SmallA up={false} />
            </MiniTool>
            <MiniTool $w={24}>
              <BrushIcon />
            </MiniTool>
          </MiniTop>
          <MiniBottom>
            <MiniTool $w={20}>
              <BoldLetter $kind="b">N</BoldLetter>
            </MiniTool>
            <MiniTool $w={22}>
              <BoldLetter $kind="i">I</BoldLetter>
            </MiniTool>
            <MiniTool $w={23}>
              <BoldLetter $kind="s">S</BoldLetter>
            </MiniTool>
            <MiniTool $w={21}>
              <HighlightIcon />
            </MiniTool>
            <MiniTool $w={14}>
              <Caret />
            </MiniTool>
            <MiniTool $w={20}>
              <FontColorIcon />
            </MiniTool>
            <MiniTool $w={13}>
              <Caret />
            </MiniTool>
            <MiniTool $w={21}>
              <BulletsIcon />
            </MiniTool>
            <MiniTool $w={13}>
              <Caret />
            </MiniTool>
            <MiniTool $w={21}>
              <NumberingIcon />
            </MiniTool>
            <MiniTool $w={13}>
              <Caret />
            </MiniTool>
          </MiniBottom>
        </MiniLeft>
        <MiniRight>
          <StylesIcon />
          <StylesLabel>Estilos</StylesLabel>
        </MiniRight>
      </MiniBar>

      <DropboxBadge>
        <Ic s={36} vb="0 0 36 36">
          <path d="M6 10l5-3.5 5 3.5-5 3.5zM6 18l5-3.5 5 3.5-5 3.5zM12 24l5-3.500 5 3.500-5 3.500zM17 10l5-3.5 5 3.5-5 3.5z" fill="#fff" />
        </Ic>
      </DropboxBadge>
    </Window>
  )
}

export default App
